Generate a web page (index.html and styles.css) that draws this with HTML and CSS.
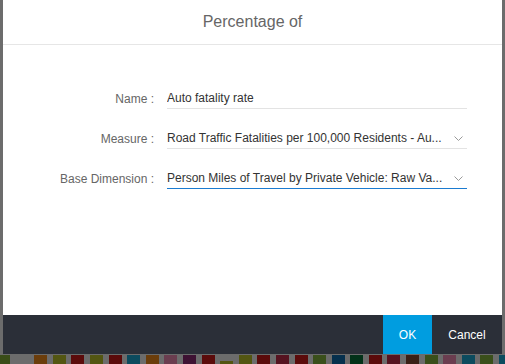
FILE: index.html
```html
<!DOCTYPE html>
<html lang="en">
<head>
  <meta charset="UTF-8">
  <meta name="viewport" content="width=device-width, initial-scale=1.0">
  <title>Percentage of</title>
  <link rel="stylesheet" href="styles.css">
</head>
<body>
  <div class="dialog">
    <div class="dialog-header">
      <span class="dialog-title">Percentage of</span>
    </div>

    <div class="dialog-body">
      <div class="form-row">
        <label class="form-label">Name :</label>
        <div class="form-field">
          <span class="field-text">Auto fatality rate</span>
        </div>
      </div>
      <div class="form-row">
        <label class="form-label">Measure :</label>
        <div class="form-field select">
          <span class="field-text">Road Traffic Fatalities per 100,000 Residents - Au...</span>
          <svg class="chevron" width="9" height="5" viewBox="0 0 9 5"><path d="M0.5 0.5 L4.5 4.5 L8.5 0.5" fill="none" stroke="#9a9a9a" stroke-width="1"/></svg>
        </div>
      </div>
      <div class="form-row">
        <label class="form-label">Base Dimension :</label>
        <div class="form-field select active">
          <span class="field-text">Person Miles of Travel by Private Vehicle: Raw Va...</span>
          <svg class="chevron" width="9" height="5" viewBox="0 0 9 5"><path d="M0.5 0.5 L4.5 4.5 L8.5 0.5" fill="none" stroke="#9a9a9a" stroke-width="1"/></svg>
        </div>
      </div>
    </div>

    <div class="dialog-footer">
      <button class="footer-btn ok">OK</button>
      <button class="footer-btn cancel">Cancel</button>
    </div>
  </div>

  <!-- tiles of the page behind the dialog -->
  <div class="tile-strip">
    <span class="tile green"></span>
    <span class="tile empty"></span>
    <span class="tile brown"></span>
    <span class="tile olive"></span>
    <span class="tile red"></span>
    <span class="tile olive"></span>
    <span class="tile red"></span>
    <span class="tile teal"></span>
    <span class="tile brown"></span>
    <span class="tile mauve"></span>
    <span class="tile purple"></span>
    <span class="tile red"></span>
    <span class="tile olive low"></span>
    <span class="tile olive"></span>
    <span class="tile red"></span>
    <span class="tile wine"></span>
    <span class="tile red"></span>
    <span class="tile moss"></span>
    <span class="tile navy"></span>
    <span class="tile forest"></span>
    <span class="tile red"></span>
    <span class="tile wine"></span>
    <span class="tile umber"></span>
    <span class="tile moss"></span>
    <span class="tile mauve"></span>
    <span class="tile teal"></span>
    <span class="tile moss"></span>
    <span class="tile teal"></span>
  </div>
</body>
</html>
```

FILE: styles.css
```css
* {
  margin: 0;
  padding: 0;
  box-sizing: border-box;
  font-family: "Liberation Sans", Arial, Helvetica, sans-serif;
}

body {
  width: 505px;
  height: 364px;
  overflow: hidden;
  background: #6c6c6c;
}

.dialog {
  display: flex;
  flex-direction: column;
  width: 499px;
  height: 354px;
  margin-left: 3px;
  background: #fff;
}

.dialog-header {
  display: flex;
  justify-content: center;
  align-items: center;
  height: 45px;
  border-bottom: 1px solid #e6e6e6;
}

.dialog-title {
  font-size: 16px;
  color: #666;
}

.dialog-body {
  flex: 1;
  display: flex;
  flex-direction: column;
  gap: 16px;
  padding-top: 40px;
}

.form-row {
  display: flex;
  align-items: flex-end;
  height: 24px;
}

.form-label {
  width: 152px;
  padding-right: 1px;
  text-align: right;
  font-size: 12px;
  color: #666;
  line-height: 20px;
}

.form-field {
  display: flex;
  align-items: center;
  width: 300px;
  height: 24px;
  margin-left: 12px;
  padding-top: 2px;
  border-bottom: 1px solid #e3e3e3;
}

.form-field.active {
  border-bottom-color: #1b7bd0;
}

.field-text {
  flex: 1;
  font-size: 12px;
  color: #333;
  white-space: nowrap;
  overflow: hidden;
}

.chevron {
  margin-right: 4px;
  margin-top: 1px;
}

.dialog-footer {
  display: flex;
  justify-content: flex-end;
  height: 39px;
  background: #2b2f38;
}

.footer-btn {
  border: none;
  height: 100%;
  font-size: 12px;
  color: #fff;
  background: transparent;
  cursor: pointer;
}

.footer-btn.ok {
  width: 49px;
  background: #009de0;
}

.footer-btn.cancel {
  width: 70px;
}

.tile-strip {
  display: flex;
  gap: 5.6px;
  margin-left: -3px;
  padding-top: 1px;
  height: 10px;
}

.tile {
  flex: none;
  width: 13px;
  height: 9px;
  background: #6c6c6c;
}

.tile.low { margin-top: 6px; }

.green { background: #3a4d18; }
.brown { background: #6b3d0b; }
.olive { background: #535612; }
.red { background: #5b0b0b; }
.teal { background: #0c4b5e; }
.mauve { background: #6a3d4f; }
.purple { background: #3e1233; }
.wine { background: #561320; }
.moss { background: #3a4f1b; }
.navy { background: #06304d; }
.forest { background: #033219; }
.umber { background: #3a2016; }
```
